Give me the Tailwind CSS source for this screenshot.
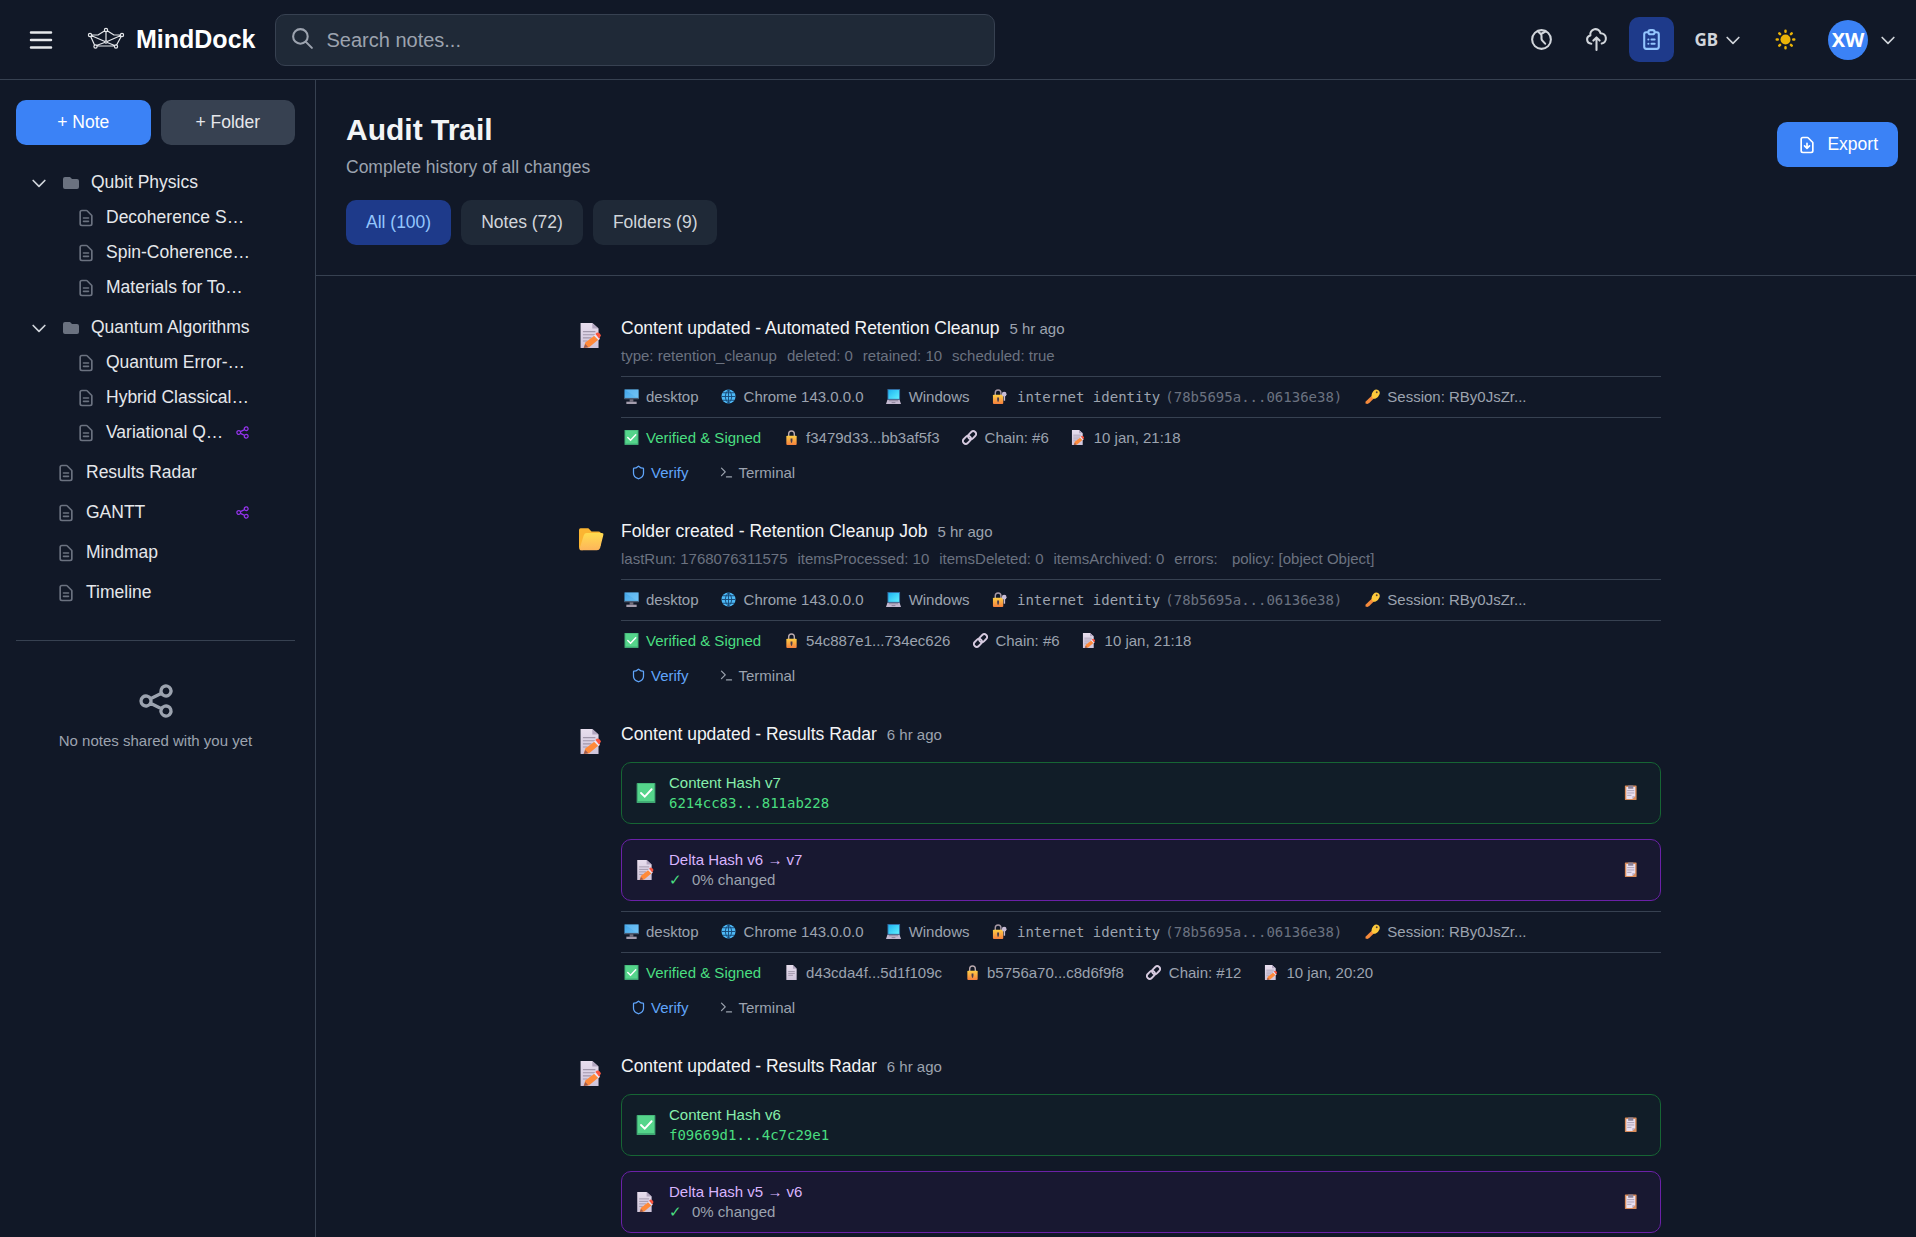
<!DOCTYPE html>
<html lang="en" class="text-[20px]">
  <head>
    <meta charset="UTF-8" />
    <meta name="viewport" content="width=device-width, initial-scale=1.0" />
    <title>MindDock - Audit Trail</title>
    <script src="https://cdn.jsdelivr.net/npm/@tailwindcss/browser@4"></script>
  </head>

  <body class="h-screen flex flex-col overflow-hidden bg-[#111827] text-[#f3f4f6] font-['Liberation_Sans',Arial,sans-serif]">
    <!-- Icon sprite -->
    <svg class="absolute size-0" aria-hidden="true">
      <symbol id="doc" viewBox="0 0 24 24" fill="none" stroke="currentColor" stroke-width="2" stroke-linecap="round" stroke-linejoin="round">
        <path d="M9 12h6m-6 4h6m2 5H7a2 2 0 01-2-2V5a2 2 0 012-2h5.586a1 1 0 01.707.293l5.414 5.414a1 1 0 01.293.707V19a2 2 0 01-2 2z" />
      </symbol>
      <symbol id="folder" viewBox="0 0 20 20" fill="currentColor">
        <path d="M2 6a2 2 0 012-2h5l2 2h5a2 2 0 012 2v6a2 2 0 01-2 2H4a2 2 0 01-2-2V6z" />
      </symbol>
      <symbol id="chevron" viewBox="0 0 24 24" fill="none" stroke="currentColor" stroke-width="2" stroke-linecap="round" stroke-linejoin="round">
        <path d="M19 9l-7 7-7-7" />
      </symbol>
      <symbol id="share" viewBox="0 0 24 24" fill="none" stroke="currentColor" stroke-width="2" stroke-linecap="round" stroke-linejoin="round">
        <path d="M8.684 13.342C8.886 12.938 9 12.482 9 12c0-.482-.114-.938-.316-1.342m0 2.684a3 3 0 110-2.684m0 2.684l6.632 3.316m-6.632-6l6.632-3.316m0 0a3 3 0 105.367-2.684 3 3 0 00-5.367 2.684zm0 9.316a3 3 0 105.368 2.684 3 3 0 00-5.368-2.684z" />
      </symbol>
      <symbol id="shield" viewBox="0 0 24 24" fill="none" stroke="currentColor" stroke-width="2" stroke-linecap="round" stroke-linejoin="round">
        <path d="M20 13c0 5-3.500 7.500-7.660 8.950a1 1 0 0 1-.670-.010C7.500 20.500 4 18 4 13V6a1 1 0 0 1 1-1c2 0 4.500-1.200 6.240-2.720a1.170 1.170 0 0 1 1.520 0C14.510 3.810 17 5 19 5a1 1 0 0 1 1 1z" />
      </symbol>
      <symbol id="terminal" viewBox="0 0 24 24" fill="none" stroke="currentColor" stroke-width="2" stroke-linecap="round" stroke-linejoin="round">
        <path d="M4 17l6-6-6-6M12 19h8" />
      </symbol>

      <linearGradient id="g-paper" x1="0" y1="0" x2="0" y2="1"><stop offset="0" stop-color="#e8deee" /><stop offset="1" stop-color="#cfc4da" /></linearGradient>
      <linearGradient id="g-lock" x1="0" y1="0" x2="0" y2="1"><stop offset="0" stop-color="#ffcf45" /><stop offset="1" stop-color="#f5803e" /></linearGradient>
      <linearGradient id="g-screen" x1="0" y1="0" x2="1" y2="1"><stop offset="0" stop-color="#3fa3e8" /><stop offset="1" stop-color="#6ec3f5" /></linearGradient>
      <linearGradient id="g-laptop" x1="0" y1="0" x2="1" y2="1"><stop offset="0" stop-color="#1fb4f2" /><stop offset="1" stop-color="#5ff0ff" /></linearGradient>
      <linearGradient id="g-folder" x1="0" y1="0" x2="0" y2="1"><stop offset="0" stop-color="#ffdc4f" /><stop offset="1" stop-color="#fdb55b" /></linearGradient>

      <symbol id="memo" viewBox="0 0 32 32">
        <path d="M2 0h15l8 7v25H2z" fill="url(#g-paper)" />
        <path d="M17 0l8 7h-8z" fill="#b3a6c0" />
        <path d="M5 11h16M5 15h16M5 19h11M5 23h6" stroke="#a197ab" stroke-width="1.5" />
        <path d="M6 32l2-7L20 16l5 5-12 10z" fill="#ff8a3a" />
        <path d="M6 32l2-5 4 4z" fill="#9b5b52" />
        <path d="M19 16l2-2 6 6-2 2z" fill="#eee4f2" />
        <path d="M21 14l2-2q4 0 5 4l-2 4z" fill="#f9553f" />
      </symbol>
      <symbol id="page" viewBox="0 0 32 32">
        <path d="M5 0h14l8 8v24H5z" fill="url(#g-paper)" />
        <path d="M19 0l8 8h-8z" fill="#b3a6c0" />
        <path d="M9 14h14M9 18h14M9 22h10" stroke="#a197ab" stroke-width="2" />
      </symbol>
      <symbol id="open-folder" viewBox="0 0 32 32">
        <path d="M0 5q0-2 2-2h10l4 4h9q3 0 3 3v15L4 31q-4 0-4-4z" fill="#fbb532" />
        <path d="M6 12q1-3 4-3h19q3 0 2 3l-4 16q-1 3-4 3H3q-3 0-2-3z" fill="url(#g-folder)" />
      </symbol>
      <symbol id="check" viewBox="0 0 32 32">
        <rect x="1" y="0" width="30" height="32" rx="1" fill="#3fa873" />
        <rect x="3" y="1" width="26" height="28" fill="#55d58b" />
        <path d="M8 16l6 6L25 10" fill="none" stroke="#fff" stroke-width="3" stroke-linecap="round" />
      </symbol>
      <symbol id="desktop" viewBox="0 0 32 32">
        <rect x="1" y="1" width="30" height="20" fill="url(#g-screen)" />
        <path d="M1 1h30v20z" fill="#7cc8f8" opacity=".4" />
        <path d="M1 19h30v3H1z" fill="#4a5a70" />
        <path d="M12 22h8v5h-8z" fill="#75707e" />
        <path d="M5 27h22v5H5z" fill="#a49dad" />
      </symbol>
      <symbol id="globe" viewBox="0 0 32 32">
        <circle cx="16" cy="16" r="15" fill="#4db8f5" />
        <path d="M1 16h30M16 1v30M4 8h24M4 24h24M16 1Q2 16 16 31Q30 16 16 1" fill="none" stroke="#184a78" stroke-width="2" />
      </symbol>
      <symbol id="laptop" viewBox="0 0 32 32">
        <rect x="3" y="0" width="27" height="23" fill="#31679c" />
        <rect x="5" y="2" width="23" height="19" fill="url(#g-laptop)" />
        <path d="M3 23h26l3 9H0z" fill="#c4b9d0" />
        <path d="M6 25h20M12 29h8" stroke="#8a8197" stroke-width="2" />
      </symbol>
      <symbol id="lock" viewBox="0 0 32 32">
        <path d="M10 14V8a6 6 0 0 1 12 0v6" fill="none" stroke="#b9a9ae" stroke-width="3" />
        <rect x="5" y="12" width="22" height="20" rx="2" fill="url(#g-lock)" />
        <path d="M14 18h4v5l-1 4h-2l-1-4z" fill="#4a3b4a" />
      </symbol>
      <symbol id="lock-key" viewBox="0 0 32 32">
        <path d="M7 14V8a6 6 0 0 1 12 0v6" fill="none" stroke="#a899a6" stroke-width="3" />
        <rect x="2" y="12" width="22" height="20" rx="2" fill="url(#g-lock)" />
        <path d="M11 18h4v5l-1 4h-2l-1-4z" fill="#4a3b4a" />
        <circle cx="26" cy="11" r="5" fill="#c9bdd6" />
        <path d="M25 14h3v11h-3z" fill="#c9bdd6" />
      </symbol>
      <symbol id="link" viewBox="0 0 32 32" fill="none" stroke="#d6cadf" stroke-width="4">
        <rect x="12" y="5" width="19" height="12" rx="6" transform="rotate(-45 21.500 11)" />
        <rect x="1" y="15" width="19" height="12" rx="6" transform="rotate(-45 10.500 21)" />
      </symbol>
      <symbol id="key" viewBox="0 0 32 32">
        <path d="M16 13l5 5L9 30l-4 2-4-1v-4z" fill="#f58a3c" />
        <path d="M18 4q5-5 10-2t3 9-8 9-8-3q-3-6 3-13z" fill="#fdc93b" />
        <circle cx="25" cy="7" r="2" fill="#5a4030" />
      </symbol>
      <symbol id="clipboard" viewBox="0 0 32 32">
        <rect x="4" y="1" width="25" height="31" rx="1" fill="#d98c5b" />
        <path d="M7 4h19v20l-6 6H7z" fill="#e9e0f0" />
        <path d="M20 30v-6h6z" fill="#b6a9c2" />
        <path d="M11 1h11v7H11z" fill="#8b8296" />
        <path d="M9 12h15M9 17h15M9 22h9" stroke="#a79db3" stroke-width="2" />
      </symbol>
    </svg>

    <header class="h-16 shrink-0 flex items-center justify-between pl-[16px] pr-[18px] border-b border-[#374151]">
      <div class="flex items-center gap-4 grow">
        <button class="p-2 text-[#e5e7eb]" aria-label="Menu">
          <svg class="size-6" viewBox="0 0 24 24" fill="none" stroke="currentColor" stroke-width="2" stroke-linecap="round"><path d="M4 6h16M4 12h16M4 18h16" /></svg>
        </button>
        <a href="#" class="flex items-center gap-2 text-xl font-bold text-white">
          <svg class="size-8" viewBox="0 0 40 40" fill="none" stroke="#e5e7eb" stroke-width="1.200" stroke-linejoin="round">
            <path d="M4 15l5 11h21l6-11M20 10l-8 5H4l16 7 16-7h-8zM20 10v12M9 26l11-4 10 4" />
            <g fill="#111827"><circle cx="20" cy="10" r="1.600" /><circle cx="4" cy="15" r="1.600" /><circle cx="36" cy="15" r="1.600" /><circle cx="9.500" cy="26.500" r="1.600" /><circle cx="30" cy="26.500" r="1.600" /><circle cx="20" cy="22" r="1.200" /></g>
          </svg>
          MindDock
        </a>
        <div class="relative w-full max-w-xl">
          <svg class="absolute left-3 top-2.5 size-5 text-[#9ca3af]" viewBox="0 0 24 24" fill="none" stroke="currentColor" stroke-width="2" stroke-linecap="round"><path d="M21 21l-6-6m2-5a7 7 0 11-14 0 7 7 0 0114 0z" /></svg>
          <input type="text" aria-label="Search notes" placeholder="Search notes..." class="w-full pl-10 pr-4 py-2 bg-[#1f2937] border border-[#374151] rounded-lg placeholder:text-[#9ca3af]" />
        </div>
      </div>

      <div class="flex items-center gap-2 text-[#d1d5db]">
        <button class="p-2 rounded-lg" aria-label="Activity">
          <svg class="size-5" viewBox="0 0 24 24" fill="none" stroke="currentColor" stroke-width="2" stroke-linecap="round" stroke-linejoin="round"><circle cx="12" cy="12" r="9" /><path d="M8.500 4l2.500 2.500c.700.700 1 1.200 1 2V11c0 1 .300 1.600 1 2.300L15.500 16M12 6.500l4-2.300" /></svg>
        </button>
        <button class="p-2 rounded-lg" aria-label="Upload">
          <svg class="size-5" viewBox="0 0 24 24" fill="none" stroke="currentColor" stroke-width="2" stroke-linecap="round" stroke-linejoin="round"><path d="M7 16a4 4 0 01-.88-7.903A5 5 0 1115.9 6L16 6a5 5 0 011 9.900M15 13l-3-3m0 0l-3 3m3-3v12" /></svg>
        </button>
        <button class="p-2 rounded-lg bg-[#1e3a8a] text-[#93c5fd]" aria-label="Audit trail">
          <svg class="size-5" viewBox="0 0 24 24" fill="none" stroke="currentColor" stroke-width="2" stroke-linecap="round" stroke-linejoin="round"><path d="M9 5H7a2 2 0 00-2 2v12a2 2 0 002 2h10a2 2 0 002-2V7a2 2 0 00-2-2h-2M9 5a2 2 0 002 2h2a2 2 0 002-2M9 5a2 2 0 012-2h2a2 2 0 012 2m-3 7h3m-3 4h3m-6-4h.01M9 16h.01" /></svg>
        </button>
        <button class="flex items-center gap-1 px-2 py-2 text-[17px] font-bold font-['Noto_Sans',sans-serif]">
          GB
          <svg class="size-4"><use href="#chevron" /></svg>
        </button>
        <button class="p-2 text-[#eab308]" aria-label="Light mode">
          <svg class="size-5" viewBox="0 0 20 20" stroke="currentColor" stroke-width="2" stroke-linecap="round"><circle cx="10" cy="10" r="4" fill="currentColor" stroke="none" /><path d="M10 3v.8M10 16.200v.8M3 10h.8M16.200 10h.8M5.050 5.050l.6.6M14.350 14.350l.6.6M5.050 14.950l.6-.6M14.350 5.650l.6-.6" /></svg>
        </button>
        <button class="flex items-center gap-2 pl-2" aria-label="Account">
          <span class="size-8 flex items-center justify-center rounded-full bg-[#3b82f6] text-white font-bold font-['Noto_Sans',sans-serif]">XW</span>
          <svg class="size-4"><use href="#chevron" /></svg>
        </button>
      </div>
    </header>

    <div class="flex grow min-h-0">
      <aside class="w-[316px] shrink-0 pl-[16px] pr-4 pt-4 border-r border-[#374151] text-sm">
        <div class="grid grid-cols-2 gap-2">
          <button class="py-2 rounded-lg bg-[#3b82f6] text-white">+ Note</button>
          <button class="py-2 rounded-lg bg-[#374151] text-[#e5e7eb]">+ Folder</button>
        </div>
        <nav id="tree" class="pt-4 pb-6 space-y-1 text-[#e5e7eb]"></nav>
        <div class="flex flex-col items-center gap-2 pt-8 border-t border-[#374151] text-[#9ca3af]">
          <svg class="size-8"><use href="#share" /></svg>
          <p class="text-xs">No notes shared with you yet</p>
        </div>
      </aside>

      <main class="grow min-w-0 flex flex-col">
        <div class="pl-6 pr-[18px] py-6 border-b border-[#374151]">
          <div class="flex items-center justify-between">
            <div>
              <h1 class="text-2xl font-bold">Audit Trail</h1>
              <p class="mt-1 text-sm text-[#9ca3af]">Complete history of all changes</p>
            </div>
            <button class="flex items-center gap-2 px-4 py-2 rounded-lg bg-[#3b82f6] text-sm text-white">
              <svg class="size-4" viewBox="0 0 24 24" fill="none" stroke="currentColor" stroke-width="2" stroke-linecap="round" stroke-linejoin="round"><path d="M12 10v6m0 0l-3-3m3 3l3-3m2 8H7a2 2 0 01-2-2V5a2 2 0 012-2h5.586a1 1 0 01.707.293l5.414 5.414a1 1 0 01.293.707V19a2 2 0 01-2 2z" /></svg>
              Export
            </button>
          </div>
          <div class="flex gap-2 mt-4 text-sm">
            <button class="px-4 py-2 rounded-lg bg-[#1e3a8a] text-[#93c5fd]">All (100)</button>
            <button class="px-4 py-2 rounded-lg bg-[#1f2937] text-[#d1d5db]">Notes (72)</button>
            <button class="px-4 py-2 rounded-lg bg-[#1f2937] text-[#d1d5db]">Folders (9)</button>
          </div>
        </div>

        <div class="grow overflow-y-auto [scrollbar-width:none]">
          <ul id="auditList" class="flex flex-col gap-[31px] w-full max-w-4xl mx-auto px-3 pt-8"></ul>
        </div>
      </main>
    </div>

    <script>
      // Sidebar tree
      const tree = [
        { folder: "Qubit Physics", notes: ["Decoherence S…", "Spin-Coherence…", "Materials for To…"] },
        { folder: "Quantum Algorithms", notes: ["Quantum Error-…", "Hybrid Classical…", "Variational Q…"] },
        { note: "Results Radar" },
        { note: "GANTT" },
        { note: "Mindmap" },
        { note: "Timeline" },
      ];
      const sharedNotes = ["Variational Q…", "GANTT"];

      const noteRow = (name, indent) => `
        <a href="#" class="flex items-center gap-2 py-1 pr-9 ${indent}">
          <svg class="size-4 shrink-0 text-[#6b7280]"><use href="#doc" /></svg>
          <span class="grow whitespace-nowrap">${name}</span>
          ${sharedNotes.includes(name) ? `<svg class="size-3 shrink-0 text-[#9333ea]"><use href="#share" /></svg>` : ""}
        </a>`;

      document.getElementById("tree").innerHTML = tree
        .map((item) =>
          item.note
            ? noteRow(item.note, "pl-8")
            : `<div>
                <div class="flex items-center gap-2 px-2 py-1">
                  <button class="p-0.5" aria-label="Collapse ${item.folder}"><svg class="size-4 text-[#d1d5db]"><use href="#chevron" /></svg></button>
                  <svg class="size-4 text-[#6b7280]"><use href="#folder" /></svg>
                  <span>${item.folder}</span>
                </div>
                ${item.notes.map((n) => noteRow(n, "pl-12")).join("")}
              </div>`
        )
        .join("");

      // Audit entries
      const entries = [
        {
          icon: "memo", title: "Content updated - Automated Retention Cleanup", time: "5 hr ago",
          meta: ["type: retention_cleanup", "deleted: 0", "retained: 10", "scheduled: true"],
          proof: [["lock", "f3479d33...bb3af5f3"], ["link", "Chain: #6"], ["memo", "10 jan, 21:18"]],
        },
        {
          icon: "open-folder", title: "Folder created - Retention Cleanup Job", time: "5 hr ago",
          meta: ["lastRun: 1768076311575", "itemsProcessed: 10", "itemsDeleted: 0", "itemsArchived: 0", "errors:&nbsp;", "policy: [object Object]"],
          proof: [["lock", "54c887e1...734ec626"], ["link", "Chain: #6"], ["memo", "10 jan, 21:18"]],
        },
        {
          icon: "memo", title: "Content updated - Results Radar", time: "6 hr ago",
          hash: ["v7", "6214cc83...811ab228", "v6 → v7"],
          proof: [["page", "d43cda4f...5d1f109c"], ["lock", "b5756a70...c8d6f9f8"], ["link", "Chain: #12"], ["memo", "10 jan, 20:20"]],
        },
        {
          icon: "memo", title: "Content updated - Results Radar", time: "6 hr ago",
          hash: ["v6", "f09669d1...4c7c29e1", "v5 → v6"],
        },
      ];

      const tag = (icon, text) => `
        <span class="flex items-center gap-1">
          <span class="w-4 flex justify-center"><svg class="size-3"><use href="#${icon}" /></svg></span>
          <span>${text}</span>
        </span>`;

      const copyButton = `
        <button class="px-2 ml-auto" aria-label="Copy hash">
          <span class="w-4 flex justify-center"><svg class="size-3"><use href="#clipboard" /></svg></span>
        </button>`;

      const hashBoxes = ([version, hash, delta]) => `
        <div class="mt-3 flex items-center gap-2 p-2 rounded-lg border border-[#166534] bg-[#14532d]/10 text-xs">
          <span class="w-[27px] flex justify-center"><svg class="size-4"><use href="#check" /></svg></span>
          <div>
            <p class="text-[#86efac]">Content Hash ${version}</p>
            <p class="text-[14px] leading-4 text-[#4ade80] font-['DejaVu_Sans_Mono',monospace]">${hash}</p>
          </div>
          ${copyButton}
        </div>
        <div class="mt-3 flex items-center gap-2 p-2 rounded-lg border border-[#6b21a8] bg-[#581c87]/10 text-xs">
          <span class="w-[27px] flex justify-center"><svg class="size-4"><use href="#memo" /></svg></span>
          <div>
            <p class="text-[#d8b4fe]">Delta Hash ${delta}</p>
            <p class="flex gap-2 text-[#9ca3af]"><span class="text-[#4ade80]">✓</span>0% changed</p>
          </div>
          ${copyButton}
        </div>`;

      const proofRows = (proof) => `
        <div class="mt-2 py-2 flex gap-4 border-y border-[#374151] text-xs text-[#9ca3af]">
          ${tag("desktop", "desktop")}
          ${tag("globe", "Chrome 143.0.0.0")}
          ${tag("laptop", "Windows")}
          ${tag("lock-key", `<span class="flex gap-1 text-[14px] leading-4 font-['DejaVu_Sans_Mono',monospace]"><code class="pl-0.5 font-['DejaVu_Sans_Mono',monospace]">internet identity</code><span class="text-[#6b7280]">(78b5695a...06136e38)</span></span>`)}
          ${tag("key", "Session: RBy0JsZr...")}
        </div>
        <div class="mt-2 flex gap-4 text-xs text-[#9ca3af]">
          ${tag("check", `<span class="text-[#4ade80]">Verified &amp; Signed</span>`)}
          ${proof.map(([icon, text]) => tag(icon, text)).join("")}
        </div>
        <div class="mt-2 flex gap-2 text-xs">
          <button class="flex items-center gap-1 px-2 py-1 text-[#60a5fa]"><svg class="size-3"><use href="#shield" /></svg>Verify</button>
          <button class="flex items-center gap-1 px-2 py-1 text-[#9ca3af]"><svg class="size-3"><use href="#terminal" /></svg>Terminal</button>
        </div>`;

      document.getElementById("auditList").innerHTML = entries
        .map(
          (e) => `
        <li class="flex gap-2">
          <div class="size-8 shrink-0 flex items-center justify-center"><svg class="size-5"><use href="#${e.icon}" /></svg></div>
          <div class="grow">
            <div class="flex items-baseline gap-2">
              <h3 class="text-sm">${e.title}</h3>
              <span class="text-xs text-[#9ca3af]">${e.time}</span>
            </div>
            ${e.meta ? `<div class="mt-1 flex gap-2 text-xs text-[#6b7280]">${e.meta.map((m) => `<span>${m}</span>`).join("")}</div>` : ""}
            ${e.hash ? hashBoxes(e.hash) : ""}
            ${e.proof ? proofRows(e.proof) : ""}
          </div>
        </li>`
        )
        .join("");
    </script>
  </body>
</html>
